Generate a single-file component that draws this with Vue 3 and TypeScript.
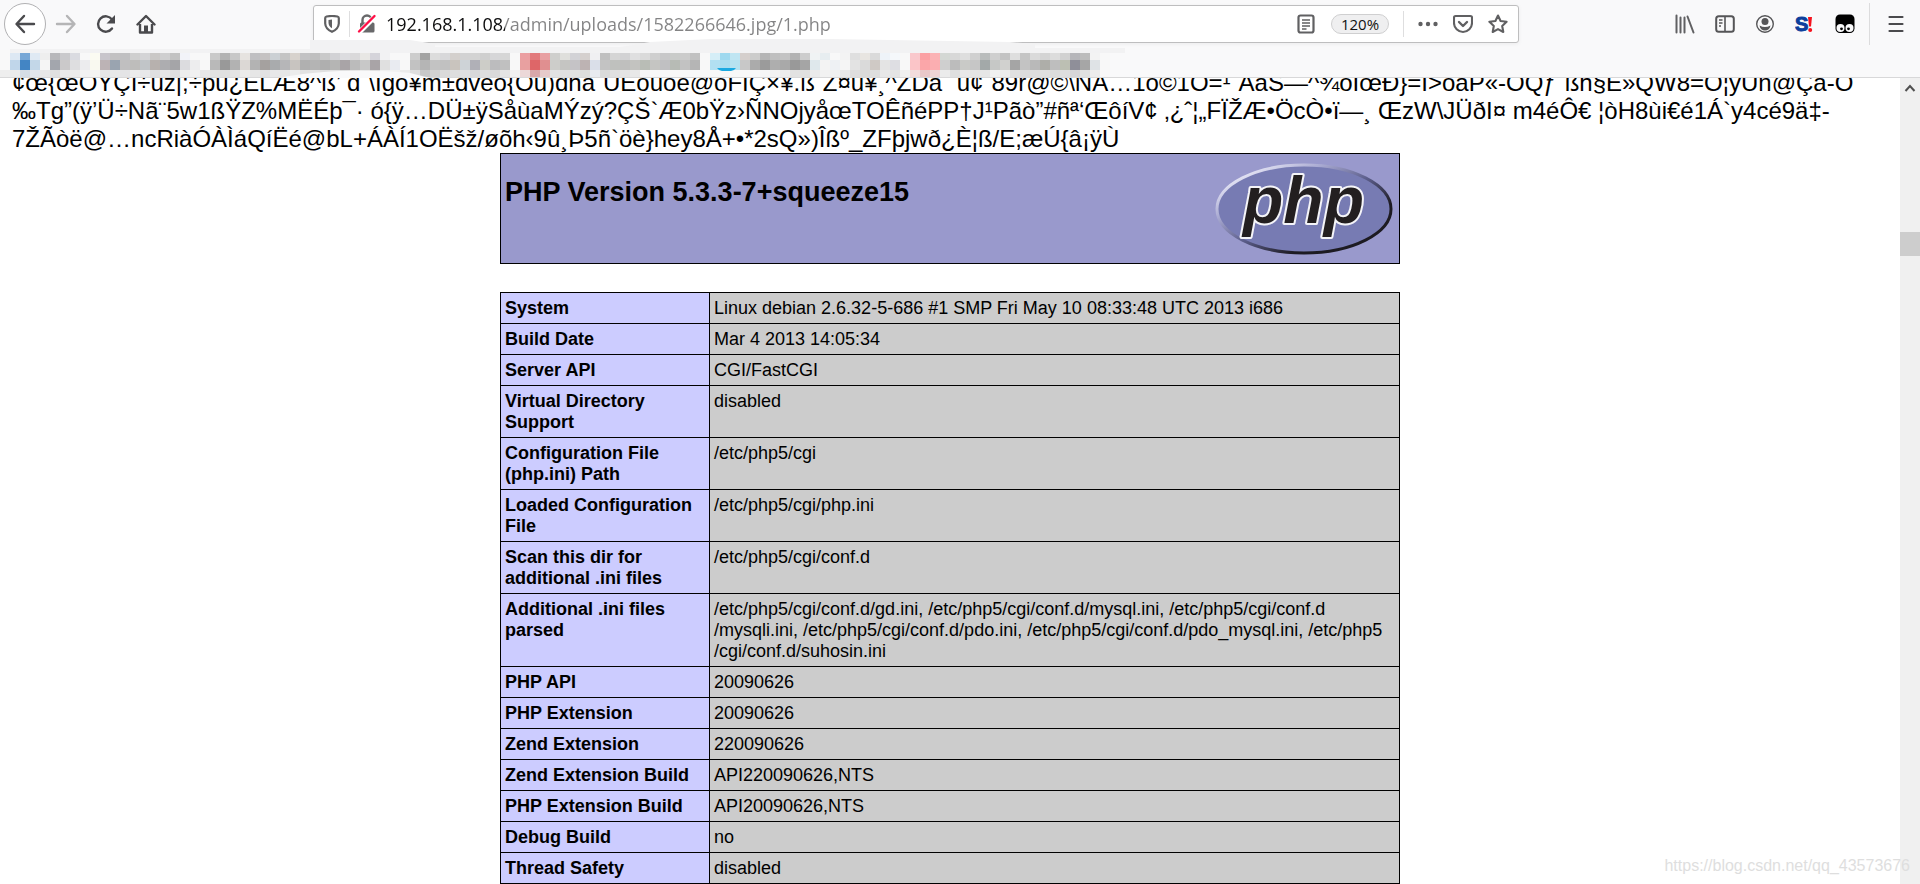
<script setup lang="ts">
import { ref } from 'vue'

interface InfoRow {
  name: string
  value: string[]
}

const address = ref('192.168.1.108/admin/uploads/1582266646.jpg/1.php')

const binaryLines: string[] = [
  '¢œ{œOYÇI÷uz|;÷pu¿ELÆ8^ß’ d¨\\Igo¥m±dveo{Ou)dha¨UEouoe@oFIÇ×¥.ß¨Z¤u¥¸^ZDa¨ u¢¨89r@©\\NA…1o©1O=¹¨AaS—^¾oIœÐ}=I>oaP«-OQƒ¨ßh§E»QW8=O¦yUn@Ça-O',
  '‰Tg”(ÿ’Ü÷Nã¨5w1ßŸZ%MËÉþ¯· ó{ÿ…DÜ±ÿSåùaMÝzý?ÇŠ`Æ0bŸz›ÑNOjyåœTOÊñéPP†J¹Pãò”#ñª‘ŒôíV¢ ‚¿ˆ¦„FÏŽÆ•ÖcÒ•ï—¸ ŒzW\\JÜðI¤ m4éÔ€ ¦òH8ùi€é1Á`y4cé9ä‡-',
  '7ŽÃòë@…ncRiàÓÀÌáQíËé@bL+ÁÀÍ1OËšž/øõh‹9û¸Þ5ñ`öè}hey8Å+•*2sQ»)Îßº_ZFþjwð¿È¦ß/E;æÚ{â¡ÿÙ',
]

const rows: InfoRow[] = [
  { name: 'System', value: ['Linux debian 2.6.32-5-686 #1 SMP Fri May 10 08:33:48 UTC 2013 i686'] },
  { name: 'Build Date', value: ['Mar 4 2013 14:05:34'] },
  { name: 'Server API', value: ['CGI/FastCGI'] },
  { name: 'Virtual Directory Support', value: ['disabled'] },
  { name: 'Configuration File (php.ini) Path', value: ['/etc/php5/cgi'] },
  { name: 'Loaded Configuration File', value: ['/etc/php5/cgi/php.ini'] },
  { name: 'Scan this dir for additional .ini files', value: ['/etc/php5/cgi/conf.d'] },
  {
    name: 'Additional .ini files parsed',
    value: [
      '/etc/php5/cgi/conf.d/gd.ini, /etc/php5/cgi/conf.d/mysql.ini, /etc/php5/cgi/conf.d',
      '/mysqli.ini, /etc/php5/cgi/conf.d/pdo.ini, /etc/php5/cgi/conf.d/pdo_mysql.ini, /etc/php5',
      '/cgi/conf.d/suhosin.ini',
    ],
  },
  { name: 'PHP API', value: ['20090626'] },
  { name: 'PHP Extension', value: ['20090626'] },
  { name: 'Zend Extension', value: ['220090626'] },
  { name: 'Zend Extension Build', value: ['API220090626,NTS'] },
  { name: 'PHP Extension Build', value: ['API20090626,NTS'] },
  { name: 'Debug Build', value: ['no'] },
  { name: 'Thread Safety', value: ['disabled'] },
]

// Pixelated bookmarks strip: one colour per 10px cell, three bands.
const mosaic: string[][] = [
  (
    'f9f9f9 dde8f3 77a7d6 dfe9f3 eeeeee b8b8bb c9c9cc dadbe1 f8f8f8 fbfbf2 c8c5cb c2c1c2 c0c0c2 cfcfcf d4d4d6 cac8c6 cfcfd0 c2c2c2 f2f3f8 f8f8f8 ' +
    'f8f8f8 c9c9c9 b3b3b3 c8c8c8 e6e3e0 bfbfc2 c5c2c2 cbd0d4 c4c4c4 d7d2cd c2c2c4 bfbfbf c9c9c9 d2d2d5 dcdcdf dad9da e8e7e4 d5d4da f2f2f3 f8f8f8 ' +
    'f8f8f8 cdcdcd a3a3a3 dcdcdc d8d8da d4d0cd d2d2d3 d3d3d3 cfcfcf d6d6d8 d6d6d6 f8f8f8 eb9ea1 e27a7c e8a0a2 cfcfcd dfdfdc d2d2d6 d5d0ce f0f0f2 ' +
    'c0c0c0 d5d5d5 d2d2d4 dfdfe0 dadada cfcfcf c8c8c9 c9cbc9 cbcbcb c1c1c1 f8f8f8 d5eef7 9fd9ef bfe5f2 d5cfcc cccccb b5b5b5 bfbfbf c3c3c3 b3b3b3 ' +
    'cdcdcd f0f3f4 e7edf0 f8f8f8 f3f3f3 dfdfdf e8e5e1 dadada eef3f8 f5f8fb f8f8f8 f9c8cc fba0a3 fbb3b5 d4d8d4 d8d8d8 dedede d0d0d0 b9bcbc cfcfcf ' +
    'c3c3c3 dedede c5c5c5 dadada d4d4d4 dcdcdc d1d1d1 b6b6ba bcbcbc f3f3f3 f8f8f8'
  ).split(' '),
  (
    'f9f9f9 c0d6ea 4385c4 c3d7e8 f5f5f5 a3a6ad cbc9ca dedee0 ececee f9f9f0 bcb3b5 9aa4b0 c0bfc0 bebdbb c1c5c8 b7b1ae adadb0 a5a5a8 dcdcdf ededee ' +
    'f8f8f8 b9b9b9 999999 b2b2b2 dcd8d5 b3b3b3 a5a19f a9abad b6b6b8 c8c4c0 b0b0b0 b4b4b4 afafaf b5b5b4 a9a4a7 bbbbbb c8c8c8 a9a4a7 e0e0e0 e9ebf1 ' +
    'f8f8f8 c2c2c2 b5b5b5 c3c3c3 c1c1c1 c9c4be ced3d7 b0b0b7 cdcdc8 bcbcbe c0c0c0 f8f8f8 e8a0a0 de6668 e08f90 cdcdca c5c5c2 c5c3c6 bdb3b3 dadfe9 ' +
    'c3c3c3 bfc1be bfbfbe c3c3c0 b9bdb6 c5c5c2 c0c0c2 b7bbb5 c2c2c2 b5b5b5 f8f8f8 b2e0f2 a9ddef b7e2f0 c8c8c8 ababab 9b9b9b aeaeae a9a9a9 999999 ' +
    'a5a5a5 dfe8ec f3f3f3 eef1f4 f5f5f5 e3e3e3 dadada cfc9c5 e4e4e4 dedee3 f8f8f8 fbc5c8 fba6a9 fbaeb1 cfcfcf bcbcbc c9cac7 c6c6c6 a3a9a9 c6c8c6 ' +
    'd1d1cf a5a5a5 c3c3c3 b9b9b9 aeaea9 bebebe bcbfb3 8f8f99 a6a6a6 dfe3e6 f8f8f8'
  ).split(' '),
  (
    'eeeeee ebebeb d5dde5 e2e6ec e8e8e8 e0e0e0 ebebeb ececec f2f2f2 f4f4f2 e6e6e6 e8e8e8 e4e4e6 ececec e8e8ea dfdfe0 e6e6e6 dedee0 ededed f1f1f1 ' +
    'e8e8e8 e2e2e2 e0e0e0 e4e4e4 ececea e6e6e6 e2e2e2 e8e8e8 e6e6e6 ececec e2e2e2 e4e4e4 e0e0e0 e2e2e2 dfdfdf e2e2e2 e8e8e8 e0e0e0 f0f0f0 f2f2f2 ' +
    'ececec dedede c8c8c8 d2d2d2 dadada dedede dfdfe1 d8d8da dedede dadada e4e4e4 f0f0f0 ecd8d8 d8a8aa e6caca e2e2e2 e0e0e0 e2e2e2 dededc e8ebf0 ' +
    'dadada e0e0e0 e4e4e4 e8e8e8 f6f6f6 f8f8f8 f8f8f8 f8f8f8 f8f8f8 f8f8f8 f8f8f8 f8f8f8 f8f8f8 f8f8f8 f8f8f8 f8f8f8 f6f6f6 f2f2f2 ececec e2e2e2 ' +
    'e0e0e0 ebebeb f2f2f2 f0f0f0 e8e8e8 dedede dadada dedede e8e8e8 e4e4e4 f0f0f0 f2dcdc e8c8c9 eed4d5 ebebeb dfdfdf e8e8e8 e4e4e4 e6e6e6 f0f0f0 ' +
    'ececec e0e0e0 dcdcdc dedede e0e0e0 dcdcdc dedede d6d6d8 e0e0e0 ececec f8f8f8'
  ).split(' '),
]
</script>

<template>
  <div class="browser">
    <header class="chrome">
      <nav class="toolbar" aria-label="Browser toolbar">
        <div class="history">
          <button class="icon back" type="button" aria-label="Back">
            <svg width="22" height="20" viewBox="0 0 22 20"><path d="M20 10H3M10 2L2.500 10L10 18" fill="none" stroke="#4a4a4d" stroke-width="2.400" stroke-linecap="round" stroke-linejoin="round" /></svg>
          </button>
          <button class="icon" type="button" aria-label="Forward" disabled>
            <svg width="22" height="20" viewBox="0 0 22 20"><path d="M2 10H19M12 2L19.500 10L12 18" fill="none" stroke="#b5b5b6" stroke-width="2.400" stroke-linecap="round" stroke-linejoin="round" /></svg>
          </button>
          <button class="icon" type="button" aria-label="Reload">
            <svg width="20" height="20" viewBox="0 0 20 20"><path d="M16 14.500A7.700 7.700 0 1 1 16 5.500" fill="none" stroke="#4a4a4d" stroke-width="2.400" stroke-linecap="round" /><path d="M19 1v8.500h-8.500z" fill="#4a4a4d" /></svg>
          </button>
          <button class="icon" type="button" aria-label="Home">
            <svg width="20" height="20" viewBox="0 0 20 20"><path d="M1.500 10.500L10 2L18.500 10.500" fill="none" stroke="#4a4a4d" stroke-width="2.400" stroke-linecap="round" stroke-linejoin="round" /><path d="M4 10v8.500h12V10" fill="none" stroke="#4a4a4d" stroke-width="2.400" stroke-linejoin="round" /><path d="M8 19v-7.500h4V19z" fill="#4a4a4d" /></svg>
          </button>
        </div>

        <div class="urlbar">
          <button class="icon small" type="button" aria-label="Tracking protection">
            <svg width="16" height="18" viewBox="0 0 16 18"><path d="M2.500 1.500Q8 .5 13.500 1.500Q14.800 1.800 14.800 3V8.500Q14.500 14 8 16.800Q1.500 14 1.200 8.500V3Q1.200 1.800 2.500 1.500Z" fill="none" stroke="#606062" stroke-width="2.200" /><path d="M8 4.500V13.300Q4.700 11.300 4.500 8V5Z" fill="#606062" /></svg>
          </button>
          <span class="rule"></span>
          <button class="icon small" type="button" aria-label="Connection is not secure">
            <svg width="20" height="20" viewBox="0 0 20 20"><path d="M5.500 9V6a4.500 4.500 0 0 1 9 0v3" fill="none" stroke="#68686a" stroke-width="2.400" /><rect x="3" y="8.500" width="14.500" height="10" rx="1.500" fill="#68686a" /><path d="M1 19.500L18.500 2" stroke="#fff" stroke-width="5" /><path d="M2 17.500L17.500 2" stroke="#ff0f46" stroke-width="2.400" stroke-linecap="round" /></svg>
          </button>
          <input id="address" v-model="address" class="address" type="text" aria-label="Address" spellcheck="false" />
          <button class="icon small" type="button" aria-label="Reader view">
            <svg width="18" height="20" viewBox="0 0 18 20"><rect x="1.500" y="1.500" width="15" height="17" rx="2" fill="none" stroke="#606062" stroke-width="2.200" /><path d="M5 6h8M5 9h8M5 12h8M5 15h4.500" stroke="#606062" stroke-width="1.400" /></svg>
          </button>
          <button class="zoom" type="button">120%</button>
          <span class="rule"></span>
          <div class="actions">
            <button class="icon" type="button" aria-label="Page actions">
              <svg width="20" height="20" viewBox="0 0 20 20"><g fill="#606062"><circle cx="2.500" cy="10" r="2.200" /><circle cx="10" cy="10" r="2.200" /><circle cx="17.500" cy="10" r="2.200" /></g></svg>
            </button>
            <button class="icon" type="button" aria-label="Save to Pocket">
              <svg width="20" height="20" viewBox="0 0 20 20"><path d="M2.500 2h15Q19 2 19 3.500V9a9 9 0 0 1-18 0V3.500Q1 2 2.500 2Z" fill="none" stroke="#606062" stroke-width="2.100" /><path d="M6 8l4 4l4-4" fill="none" stroke="#606062" stroke-width="2.400" stroke-linecap="round" stroke-linejoin="round" /></svg>
            </button>
            <button class="icon" type="button" aria-label="Bookmark this page">
              <svg width="20" height="20" viewBox="0 0 20 20"><path d="M10 1.500l2.600 5.500l6 .8l-4.400 4.200l1.100 6l-5.300-2.900l-5.300 2.900l1.100-6l-4.400-4.200l6-.8z" fill="none" stroke="#606062" stroke-width="2.100" stroke-linejoin="round" /></svg>
            </button>
          </div>
        </div>

        <div class="tools">
          <button class="icon" type="button" aria-label="Library">
            <svg width="20" height="20" viewBox="0 0 20 20"><path d="M1.500 1.500v17M5.500 3.500v15M9.500 3.500v15M12.500 2.500l6 16" fill="none" stroke="#606062" stroke-width="2" stroke-linecap="round" /></svg>
          </button>
          <button class="icon" type="button" aria-label="Sidebars">
            <svg width="20" height="20" viewBox="0 0 20 20"><rect x="1.200" y="2.200" width="17.600" height="15.600" rx="2.500" fill="none" stroke="#555557" stroke-width="2" /><path d="M10 2v16" stroke="#555557" stroke-width="1.600" /><path d="M4 6h3.500M4 9h3.500M4 12h2" stroke="#555557" stroke-width="1.500" /></svg>
          </button>
          <button class="icon" type="button" aria-label="Account">
            <svg width="20" height="20" viewBox="0 0 20 20"><circle cx="10" cy="10" r="8.300" fill="none" stroke="#555557" stroke-width="1.400" /><circle cx="10" cy="7.500" r="3.500" fill="#555557" /><path d="M4.500 11.500Q10 14.500 15.500 11.500Q14.500 16.500 10 16.500Q5.500 16.500 4.500 11.500Z" fill="#555557" /></svg>
          </button>
          <button class="icon" type="button" aria-label="S extension">
            <svg width="20" height="20" viewBox="0 0 20 20"><text x="0" y="17" class="ext-s">S</text><path d="M13 3h4l-1 9.500h-2z" fill="#f5121d" /><circle cx="15.200" cy="16" r="2" fill="#f5121d" /></svg>
          </button>
          <button class="icon" type="button" aria-label="Userscript manager">
            <svg width="20" height="20" viewBox="0 0 20 20"><rect x="0.500" y="0.500" width="19" height="18.500" rx="4.500" fill="#000" /><circle cx="5.500" cy="14" r="4" fill="#f9f9fa" /><circle cx="14.500" cy="14" r="4" fill="#f9f9fa" /><circle cx="6.500" cy="14.800" r="1.400" fill="#000" /><circle cx="13.500" cy="14.800" r="1.400" fill="#000" /></svg>
          </button>
          <span class="divider"></span>
          <button class="icon" type="button" aria-label="Open menu">
            <svg width="16" height="18" viewBox="0 0 16 18"><path d="M1.500 2h13M1.500 9h13M1.500 16h13" stroke="#4a4a4d" stroke-width="2.200" stroke-linecap="round" /></svg>
          </button>
        </div>
      </nav>

      <div class="bookmarks" aria-hidden="true">
        <svg class="smear" width="1160" height="14" viewBox="0 0 1160 14">
          <path d="M0 14V10H300V1H400L425 5V8H610L640 3L700 0L820 0L1000 3L1025 5V9L1115 9V14Z" fill="#f2f2f3" />
        </svg>
        <div v-for="(band, b) in mosaic" :key="b" class="band">
          <i v-for="(color, c) in band" :key="c" :style="{ background: '#' + color }"></i>
        </div>
        <svg class="smear low" width="1160" height="10" viewBox="0 0 1160 10">
          <path d="M280 10Q300 5 340 3Q380 2 410 5L430 10Z" fill="#f9f9fa" />
          <path d="M717 0h19q-2 3 -5 3h-9q-3 0 -5-3z" fill="#1ba9e1" />
        </svg>
      </div>
    </header>

    <div class="viewport">
      <main class="page">
        <div class="content">
          <p class="binary">
            <span v-for="(line, i) in binaryLines" :key="i">{{ line }}</span>
          </p>

          <section class="banner">
            <h1>PHP Version 5.3.3-7+squeeze15</h1>
            <a href="#" aria-label="PHP logo">
              <svg width="180" height="96" viewBox="0 0 180 96">
                <defs>
                  <linearGradient id="rim" x1="0.150" y1="0.100" x2="0.850" y2="0.800">
                    <stop offset="0" stop-color="#e4e4f4" />
                    <stop offset="0.250" stop-color="#a9aad2" />
                    <stop offset="0.550" stop-color="#5b5d8a" />
                    <stop offset="0.850" stop-color="#1d1b22" />
                  </linearGradient>
                </defs>
                <ellipse cx="89" cy="49" rx="87" ry="44" fill="#777bb3" stroke="url(#rim)" stroke-width="3" />
                <text x="28" y="63" class="logo-word">php</text>
              </svg>
            </a>
          </section>

          <table class="info">
            <tbody>
              <tr v-for="row in rows" :key="row.name">
                <th scope="row">{{ row.name }}</th>
                <td><span v-for="(part, i) in row.value" :key="i">{{ part }}</span></td>
              </tr>
            </tbody>
          </table>
        </div>
      </main>
      <aside class="scrollbar" aria-hidden="true">
        <svg width="20" height="20" viewBox="0 0 20 20"><path d="M5.500 13L10 8L14.500 13" fill="none" stroke="#505050" stroke-width="2" /></svg>
        <div class="thumb"></div>
      </aside>
      <div class="watermark">https://blog.csdn.net/qq_43573676</div>
    </div>
  </div>
</template>

<style>
html,
body {
  margin: 0;
  overflow: hidden;
}
</style>

<style scoped>
.browser {
  display: flex;
  flex-direction: column;
  height: 100vh;
  background: #fff;
  color: #000;
  font-family: "Liberation Sans", Arial, sans-serif;
}

.chrome {
  flex: none;
  background: #f9f9fa;
  border-bottom: 1px solid #d8d8d9;
}

.toolbar {
  display: flex;
  align-items: center;
  height: 48px;
}

.icon {
  display: flex;
  align-items: center;
  justify-content: center;
  flex: none;
  width: 40px;
  height: 40px;
  padding: 0;
  border: 0;
  background: none;
}

.icon svg {
  display: block;
}

.history {
  display: flex;
  align-items: center;
  flex: none;
  width: 313px;
  padding-left: 4px;
  box-sizing: border-box;
}

.icon.back {
  box-sizing: border-box;
  width: 42px;
  height: 42px;
  border: 1px solid #b1b1b3;
  border-radius: 50%;
  background: #fff;
}

.urlbar {
  display: flex;
  align-items: center;
  flex: 1;
  box-sizing: border-box;
  height: 38px;
  padding: 0 3px;
  border: 1px solid #bebebf;
  border-radius: 3px;
  background: #fff;
  box-shadow: 0 1px 4px rgba(0, 0, 0, 0.06);
}

.icon.small {
  width: 30px;
}

.rule {
  flex: none;
  width: 1px;
  height: 26px;
  margin: 0 2px;
  background: #dededf;
}

.address {
  flex: 1;
  min-width: 0;
  height: 30px;
  padding: 0;
  margin-left: 4px;
  border: 0;
  outline: 0;
  font-family: "Open Sans", "Noto Sans", sans-serif;
  font-size: 18px;
  color: transparent;
  caret-color: #0c0c0d;
  background: linear-gradient(to right, #0c0c0d 119px, #838384 119px);
  background-clip: text;
  -webkit-background-clip: text;
}

.zoom {
  flex: none;
  width: 58px;
  height: 20px;
  margin: 0 12px 0 10px;
  padding: 0;
  border: 1px solid #cfcfd0;
  border-radius: 10px;
  background: #efeff0;
  color: #111;
  font-family: "Open Sans", "Noto Sans", sans-serif;
  font-size: 15px;
  line-height: 18px;
}

.actions {
  display: flex;
  margin-left: 4px;
}

.actions .icon {
  width: 35px;
}

.tools {
  display: flex;
  align-items: center;
  flex: none;
  width: 401px;
  justify-content: flex-end;
}

.divider {
  width: 1px;
  height: 42px;
  margin: 0 6px 0 4px;
  background: #dcdcdd;
}

.tools .icon:last-child {
  margin-right: 4px;
}

.ext-s {
  font: bold 20px "Liberation Sans", Arial, sans-serif;
  fill: #0d3f9c;
  stroke: #0d3f9c;
  stroke-width: 1px;
}

.bookmarks {
  position: relative;
  padding-top: 2px;
  height: 27px;
}

.band {
  display: flex;
  height: 10px;
  overflow: hidden;
}

.band:nth-of-type(3) {
  height: 7px;
}

.band i {
  flex: none;
  width: 10px;
}

.smear {
  position: absolute;
  left: 10px;
  top: -9px;
}

.smear.low {
  left: 0;
  top: 20px;
}

.viewport {
  position: relative;
  display: flex;
  flex: 1;
  min-height: 0;
}

.page {
  flex: 1;
  min-width: 0;
  overflow: hidden;
}

/* The document is scrolled part of a line past the top edge. */
.content {
  margin: -9px 12px 0;
}

.binary {
  margin: 0;
  font-size: 24px;
  line-height: 28px;
}

.binary span,
.info td span {
  display: block;
  white-space: nowrap;
}

.banner {
  display: flex;
  justify-content: space-between;
  box-sizing: border-box;
  width: min(100%, 900px);
  height: 111px;
  margin: 0 auto 28px;
  padding: 6px 4px;
  border: 1px solid #000;
  background: #9999cc;
}

.banner h1 {
  margin: 16px 0 0;
  font-size: 27px;
  line-height: 32px;
}

.banner svg {
  display: block;
}

.logo-word {
  font: italic bold 66px "Liberation Sans", Arial, sans-serif;
  fill: #231f20;
  stroke: #f4f4f8;
  stroke-width: 4px;
  stroke-linejoin: round;
  paint-order: stroke;
}

.info {
  width: min(100%, 900px);
  margin: 0 auto;
  border-collapse: collapse;
  table-layout: fixed;
  font-size: 18px;
  line-height: 21px;
}

.info th,
.info td {
  padding: 5px 4px 4px;
  border: 1px solid #000;
  text-align: left;
  vertical-align: top;
}

.info th {
  width: 200px;
  background: #ccccff;
}

.info td {
  background: #cccccc;
}

.scrollbar {
  flex: none;
  width: 20px;
  background: #f0f0f0;
}

.scrollbar svg {
  display: block;
}

.thumb {
  height: 24px;
  margin-top: 134px;
  background: #cdcdcd;
}

.watermark {
  position: absolute;
  right: 10px;
  bottom: 8px;
  font-size: 16px;
  line-height: 20px;
  color: #dedede;
}
</style>
